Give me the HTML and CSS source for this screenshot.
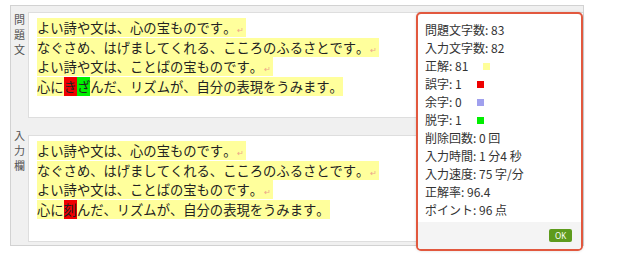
FILE: index.html
```html
<!DOCTYPE html>
<html lang="ja">
<head>
<meta charset="utf-8">
<link rel="stylesheet" href="styles.css">
</head>
<body>
<div class="page">
  <div class="panel">
    <div class="row">
      <div class="label">問<br>題<br>文</div>
      <div class="box">
        <div class="line"><span class="hl">よい詩や文は、心の宝ものです。<span class="ret">↵</span></span></div>
        <div class="line"><span class="hl">なぐさめ、はげましてくれる、こころのふるさとです。<span class="ret">↵</span></span></div>
        <div class="line"><span class="hl">よい詩や文は、ことばの宝ものです。<span class="ret">↵</span></span></div>
        <div class="line"><span class="hl">心に<span class="err">き</span><span class="miss">ざ</span>んだ、リズムが、自分の表現をうみます。</span></div>
      </div>
    </div>
    <div class="row row-input">
      <div class="label label-input">入<br>力<br>欄</div>
      <div class="box box-input">
        <div class="line"><span class="hl">よい詩や文は、心の宝ものです。<span class="ret">↵</span></span></div>
        <div class="line"><span class="hl">なぐさめ、はげましてくれる、こころのふるさとです。<span class="ret">↵</span></span></div>
        <div class="line"><span class="hl">よい詩や文は、ことばの宝ものです。<span class="ret">↵</span></span></div>
        <div class="line"><span class="hl">心に<span class="err">刻</span>んだ、リズムが、自分の表現をうみます。</span></div>
      </div>
    </div>
  </div>

  <div class="popup">
    <div class="stats">
      <div class="stat">問題文字数: 83</div>
      <div class="stat">入力文字数: 82</div>
      <div class="stat"><span>正解: 81</span><span class="sw sw-ok"></span></div>
      <div class="stat"><span>誤字: 1</span><span class="sw sw-err"></span></div>
      <div class="stat"><span>余字: 0</span><span class="sw sw-extra"></span></div>
      <div class="stat"><span>脱字: 1</span><span class="sw sw-miss"></span></div>
      <div class="stat">削除回数: 0 回</div>
      <div class="stat">入力時間: 1 分4 秒</div>
      <div class="stat">入力速度: 75 字/分</div>
      <div class="stat">正解率: 96.4</div>
      <div class="stat">ポイント: 96 点</div>
    </div>
    <div class="footer">
      <button class="ok">OK</button>
    </div>
  </div>
</div>
</body>
</html>
```

FILE: styles.css
```css
html, body {
  margin: 0;
  padding: 0;
  background: #ffffff;
}

body {
  width: 640px;
  height: 260px;
  overflow: hidden;
  font-family: "Noto Sans CJK JP", "Noto Sans", sans-serif;
  font-kerning: none;
  text-spacing-trim: space-all;
  color: #222;
}

.page {
  position: relative;
  width: 640px;
  height: 260px;
}

.panel {
  margin: 5px 0 0 10px;
  width: 572px;
  height: 233px;
  border: 1px solid #d2d2d2;
  background: #f0f0f0;
  box-sizing: content-box;
  padding: 6px 0 0 0;
  display: flex;
  flex-direction: column;
}

.row {
  display: flex;
  align-items: flex-start;
}

.row-input {
  margin-top: 17px;
}

.label {
  width: 17px;
  font-size: 11px;
  line-height: 15px;
  color: #555;
  text-align: center;
}

.label-input {
  margin-top: -7px;
}

.box {
  flex: 1;
  height: 106px;
  background: #fff;
  border: 1px solid #dedede;
  border-right: none;
  box-sizing: border-box;
  padding: 6px 0 0 8px;
  font-size: 13.3px;
  line-height: 17.5px;
  color: #222;
  font-feature-settings: "kern" 0, "palt" 0;
}

.box-input {
  height: 107px;
}

.line {
  white-space: nowrap;
}

.hl {
  background: #ffff9c;
}

.ret {
  font-size: 8px;
  color: #eba58a;
  margin-left: 1px;
  padding-right: 2px;
}

.err {
  background: #f00000;
}

.miss {
  background: #00f000;
}

.popup {
  position: absolute;
  left: 416px;
  top: 7px;
  width: 167px;
  height: 239px;
  box-sizing: border-box;
  border: 2px solid #e2583e;
  border-radius: 5px;
  background: #fff;
  display: flex;
  flex-direction: column;
  overflow: hidden;
  box-shadow: 0 0 3px rgba(0,0,0,0.15);
}

.stats {
  flex: 1;
  padding: 7px 0 0 7px;
}

.stat {
  font-size: 12px;
  line-height: 18px;
  color: #333;
  white-space: nowrap;
}

.sw {
  display: inline-block;
  width: 7px;
  height: 7px;
  margin-left: 15px;
  vertical-align: middle;
  position: relative;
  top: -1px;
}

.sw-ok { background: #ffff99; }
.sw-err { background: #ee0000; }
.sw-extra { background: #a0a0ee; }
.sw-miss { background: #00ee00; }

.footer {
  height: 27px;
  background: #f4f4f4;
  display: flex;
  justify-content: flex-end;
  align-items: center;
  padding-right: 9px;
}

.ok {
  width: 23px;
  height: 13px;
  padding: 0;
  border: none;
  border-radius: 2px;
  background: #5e9b1d;
  color: #fff;
  font-family: "Noto Sans", sans-serif;
  font-size: 8px;
  line-height: 13px;
}
```
